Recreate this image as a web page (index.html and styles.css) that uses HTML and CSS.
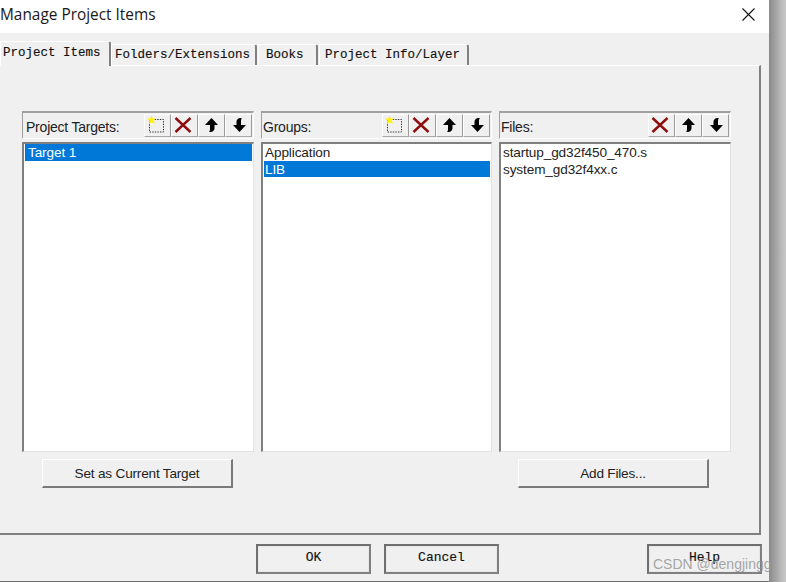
FILE: index.html
```html
<!DOCTYPE html>
<html lang="en">
<head>
<meta charset="utf-8">
<title>Manage Project Items</title>
<link rel="stylesheet" href="styles.css">
</head>
<body>
<div class="screen">
  <div class="dialog">
    <header class="titlebar">
      <span class="title">Manage Project Items</span>
      <svg class="close" width="15" height="15" viewBox="0 0 15 15"><path d="M1.5 1.5 13.5 13.5M13.5 1.5 1.5 13.5" stroke="#111" stroke-width="1.1" fill="none"/></svg>
    </header>
    <div class="body">
      <nav class="tabs">
        <span class="tab tab-active">Project Items</span>
        <span class="tab tab-folders">Folders/Extensions</span>
        <span class="tab tab-books">Books</span>
        <span class="tab tab-info">Project Info/Layer</span>
      </nav>
      <section class="panel">
        <div class="columns">
          <div class="column">
            <div class="toolbar">
              <span class="toolbar-label label-first">Project Targets:</span>
              <button class="tool"><svg width="22" height="20" viewBox="0 0 22 20"><use href="#i-new"/></svg></button>
              <button class="tool"><svg width="22" height="20" viewBox="0 0 22 20"><use href="#i-del"/></svg></button>
              <button class="tool"><svg width="22" height="20" viewBox="0 0 22 20"><use href="#i-up"/></svg></button>
              <button class="tool"><svg width="22" height="20" viewBox="0 0 22 20"><use href="#i-down"/></svg></button>
            </div>
            <ul class="list list-first">
              <li class="item selected">Target 1</li>
            </ul>
            <div class="action"><button class="btn btn-action">Set as Current Target</button></div>
          </div>
          <div class="column">
            <div class="toolbar">
              <span class="toolbar-label">Groups:</span>
              <button class="tool"><svg width="22" height="20" viewBox="0 0 22 20"><use href="#i-new"/></svg></button>
              <button class="tool"><svg width="22" height="20" viewBox="0 0 22 20"><use href="#i-del"/></svg></button>
              <button class="tool"><svg width="22" height="20" viewBox="0 0 22 20"><use href="#i-up"/></svg></button>
              <button class="tool"><svg width="22" height="20" viewBox="0 0 22 20"><use href="#i-down"/></svg></button>
            </div>
            <ul class="list">
              <li class="item">Application</li>
              <li class="item selected">LIB</li>
            </ul>
          </div>
          <div class="column">
            <div class="toolbar">
              <span class="toolbar-label">Files:</span>
              <button class="tool"><svg width="22" height="20" viewBox="0 0 22 20"><use href="#i-del"/></svg></button>
              <button class="tool"><svg width="22" height="20" viewBox="0 0 22 20"><use href="#i-up"/></svg></button>
              <button class="tool"><svg width="22" height="20" viewBox="0 0 22 20"><use href="#i-down"/></svg></button>
            </div>
            <ul class="list">
              <li class="item">startup_gd32f450_470.s</li>
              <li class="item">system_gd32f4xx.c</li>
            </ul>
            <div class="action action-files"><button class="btn btn-action">Add Files...</button></div>
          </div>
        </div>
      </section>
      <footer class="footer">
        <button class="btn btn-footer">OK</button>
        <button class="btn btn-footer btn-cancel">Cancel</button>
        <button class="btn btn-footer btn-help">Help</button>
      </footer>
    </div>
  </div>
  <div class="shadow"></div>
  <span class="watermark">CSDN @dengjingg</span>
</div>
<svg class="defs" width="0" height="0">
  <defs>
    <g id="i-new">
      <rect x="2.5" y="4.5" width="14" height="12.5" fill="none" stroke="#333" stroke-width="1" stroke-dasharray="1.4 1.2"/>
      <path d="M4.5 0.5 5.8 3.6 9 3.2 6.7 5.6 8 8.8 4.8 7.2 1.6 9.2 2.8 5.8 0 3.4 3.4 3.6Z" fill="#fff200"/>
    </g>
    <g id="i-del">
      <path d="M1.5 3 16.5 17M16.5 3 1.5 17" stroke="#8e0d0d" stroke-width="2.4" fill="none"/>
    </g>
    <g id="i-up">
      <path d="M10.5 3 17 10H13.5V13C13.5 15 12.5 16.5 10 17H8C9 16 9 15 9 13V10H4Z" fill="#000"/>
    </g>
    <g id="i-down">
      <path d="M11.5 17 5 10H8.5V7C8.5 5 9.5 3.5 12 3H14C13 4 13 5 13 7V10H18Z" fill="#000"/>
    </g>
  </defs>
</svg>
</body>
</html>
```
FILE: styles.css
```css
* { box-sizing: border-box; }
html, body { margin: 0; padding: 0; background: #fff; }
.screen {
  position: relative;
  display: flex;
  width: 786px;
  height: 582px;
  overflow: hidden;
}
.dialog {
  display: flex;
  flex-direction: column;
  width: 769px;
  height: 582px;
  border-bottom: 1px solid #6e6e6e;
  background: #f0f0f0;
}
.shadow {
  width: 17px;
  background: linear-gradient(to right, #8a8a8a, #b8b8b8 70%, #c8c8c8);
}
.titlebar {
  display: flex;
  align-items: center;
  justify-content: space-between;
  height: 33px;
  padding: 0 13px 5px 0;
  background: #fff;
}
.title {
  font: 15.4px "Open Sans", "Noto Sans", sans-serif;
  color: #1a1a1a;
}
.body {
  display: flex;
  flex-direction: column;
  flex: 1;
}
.tabs {
  display: flex;
  align-items: flex-end;
  height: 32px;
  padding-top: 8px;
}
.tab {
  height: 21px;
  padding: 2px 0 0 3px;
  margin-right: 1px;
  border-top: 1px solid #fff;
  border-left: 1px solid #fff;
  border-right: 2px solid #808080;
  border-top-right-radius: 3px;
  font: 12.5px/16px "Liberation Mono", monospace;
  -webkit-text-stroke: 0.15px #111;
  color: #111;
  white-space: pre;
}
.tab-active {
  position: relative;
  z-index: 1;
  width: 111px;
  height: 25px;
  margin-right: 0;
  margin-bottom: -1px;
  padding-left: 2px;
  padding-top: 3px;
  background: #f0f0f0;
}
.tab-folders { width: 146px; }
.tab-books { width: 60px; padding-left: 7px; }
.tab-info { width: 150px; padding-left: 5px; }
.panel {
  height: 470px;
  width: 761px;
  padding: 45px 0 0 22px;
  border-top: 1px solid #fff;
  border-right: 2px solid #808080;
  border-bottom: 2px solid #808080;
}
.columns {
  display: grid;
  grid-template-columns: 232px 231px 232px;
  column-gap: 7px;
}
.column {
  display: flex;
  flex-direction: column;
  gap: 3px;
}
.toolbar {
  display: flex;
  align-items: center;
  height: 28px;
  padding: 1px 1px 2px 0;
  border-top: 2px solid #a0a0a0;
  border-left: 1px solid #a0a0a0;
  border-bottom: 1px solid #fff;
  border-right: 1px solid #fff;
}
.toolbar-label {
  flex: 1;
  padding: 4px 0 0 1px;
  font: 14px "Liberation Sans", Arial, sans-serif;
  color: #222;
  letter-spacing: -0.22px;
}
.label-first { padding-left: 3px; }
.tool {
  display: flex;
  align-items: center;
  justify-content: center;
  width: 27px;
  height: 23px;
  padding: 0;
  border: 0;
  border-right: 1px solid #9a9a9a;
  border-bottom: 1px solid #a8a8a8;
  border-top: 1px solid #fff;
  border-left: 1px solid #fff;
  background: #f0f0f0;
}
.list {
  height: 310px;
  margin: 0;
  padding: 0 1px;
  list-style: none;
  background: #fff;
  border-top: 2px solid #808080;
  border-left: 2px solid #808080;
  border-right: 1px solid #e2e2e2;
  border-bottom: 1px solid #e2e2e2;
}
.item {
  height: 16.5px;
  padding: 1px 0 0 1px;
  font: 13.6px/16px "Liberation Sans", Arial, sans-serif;
  color: #222;
  letter-spacing: -0.12px;
  white-space: nowrap;
}
.list-first .item { padding-left: 3px; }
.selected {
  background: #0078d7;
  color: #fff;
}
.action {
  display: flex;
  justify-content: center;
  padding-top: 4px;
  padding-right: 1px;
}
.action-files { padding-right: 3px; }
.btn {
  padding: 0;
  background: #f0f0f0;
  border-top: 1px solid #fff;
  border-left: 1px solid #fff;
  border-right: 2px solid #7a7a7a;
  border-bottom: 2px solid #7a7a7a;
  color: #222;
}
.btn-action {
  width: 191px;
  height: 29px;
  font: 13.6px "Liberation Sans", Arial, sans-serif;
  letter-spacing: -0.2px;
}
.footer {
  display: flex;
  padding: 9px 0 0 256px;
}
.btn-footer {
  width: 115px;
  height: 30px;
  padding-bottom: 3px;
  border: 2px solid;
  border-color: #6f6f6f #808080 #808080 #6f6f6f;
  outline: 1px solid #e8e8e8;
  outline-offset: -3px;
  font: 13px "Liberation Mono", monospace;
  -webkit-text-stroke: 0.15px #111;
  color: #111;
}
.btn-cancel { margin-left: 13px; }
.btn-help { margin-left: 148px; }
.watermark {
  position: absolute;
  left: 653px;
  top: 556px;
  font: 14px "Liberation Sans", Arial, sans-serif;
  color: rgba(150, 150, 150, 0.85);
  letter-spacing: 0;
}
.defs { position: absolute; }
```
